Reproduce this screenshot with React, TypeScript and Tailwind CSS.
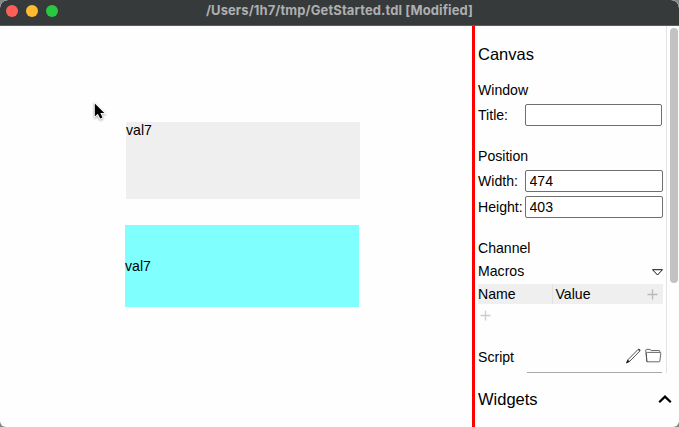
import React from "react";

function Field({ label, value, width }: { label: string; value: string; width: string }) {
  return (
    <div className="flex h-[22px] items-center">
      <label className="w-[47px] shrink-0 whitespace-nowrap">{label}</label>
      <input
        aria-label={label}
        defaultValue={value}
        className={`h-[22px] ${width} rounded-[2px] border border-[#6f6f6f] bg-white px-[3.5px] text-[14.1px] text-black outline-none`}
      />
    </div>
  );
}

function Plus({ className }: { className: string }) {
  return (
    <svg className={className} width="11" height="11" viewBox="0 0 11 11" fill="none" stroke="currentColor" strokeWidth="1.3">
      <path d="M5.5 0.5V10.5M0.5 5.5H10.5" />
    </svg>
  );
}

function TitleBar() {
  return (
    <header className="relative flex h-[26px] shrink-0 items-start justify-center rounded-t-[8px] border-b border-[#5b5d5e] bg-[#373a3b]">
      <div className="absolute left-[6px] top-[5px] flex gap-2">
        <span className="size-3 rounded-full bg-[#ff5f57]" />
        <span className="size-3 rounded-full bg-[#febc2e]" />
        <span className="size-3 rounded-full bg-[#28c840]" />
      </div>
      <h1 className="whitespace-nowrap font-['Inter',sans-serif] text-[13px] font-bold leading-[21px] tracking-[0.1px] text-[#adafb0]">
        /Users/1h7/tmp/GetStarted.tdl [Modified]
      </h1>
    </header>
  );
}

function Canvas() {
  return (
    <main className="relative w-[472px] shrink-0">
      <div className="absolute left-[126px] top-[96px] h-[77px] w-[234px] bg-[#efefef] leading-4">val7</div>
      <div className="absolute left-[125px] top-[199px] flex h-[82px] w-[234px] items-center bg-[#80ffff] pt-px">val7</div>
      <svg className="absolute left-[92px] top-[75px] drop-shadow-[0_1px_1px_rgba(0,0,0,0.35)]" width="15" height="21" viewBox="0 0 15 21">
        <path
          d="M2.8 2.5V15.5L5.8 12.8L8.2 17.6L10.5 16.6L8.3 11.9H12.3Z"
          fill="#000"
          stroke="#fff"
          strokeWidth="1.6"
          paintOrder="stroke"
        />
      </svg>
    </main>
  );
}

function Properties() {
  return (
    <section className="flex h-[348px] shrink-0">
      <div className="h-[347px] w-[192px] border-r border-[#e3e3e3] pl-[3px] pt-[17px] leading-5">
        <h2 className="text-[16.5px] leading-[22px]">Canvas</h2>
        <h3 className="mt-[15px] h-5">Window</h3>
        <div className="mt-1">
          <Field label="Title:" value="" width="w-[137px]" />
        </div>
        <h3 className="mt-5 h-5">Position</h3>
        <div className="mt-1 flex flex-col gap-1">
          <Field label="Width:" value="474" width="w-[138px]" />
          <Field label="Height:" value="403" width="w-[138px]" />
        </div>
        <h3 className="mt-5 h-5">Channel</h3>
        <div className="mt-[3px] flex h-5 w-[185px] items-center justify-between">
          <span>Macros</span>
          <svg className="mt-[3px]" width="11" height="7" viewBox="0 0 11 7" fill="none" stroke="#111" strokeWidth="1">
            <path d="M0.5 0.7H10.5L5.5 6Z" />
          </svg>
        </div>
        <div className="mt-[3px] flex h-5 w-[185px] items-center bg-[#efefef]">
          <span className="h-5 w-[75px] border-r border-[#e2e2e2]">Name</span>
          <span className="flex-1 pl-[2.5px]">Value</span>
          <Plus className="mr-[5px] text-[#b8b8b8]" />
        </div>
        <div className="flex h-[43px] items-start pl-[2px] pt-[6px]">
          <Plus className="text-[#cccccc]" />
        </div>
        <div className="flex h-[26px] w-[184px]">
          <span className="w-[49px] shrink-0">Script</span>
          <div className="flex flex-1 justify-end border-b border-[#a8a8a8]">
            <svg className="mt-px" width="16" height="16" viewBox="0 0 16 16" fill="none" stroke="#222" strokeWidth="0.8">
              <path d="M1 14.3L2.1 11.6L12 1.5Q12.9 0.7 13.7 1.5Q14.5 2.3 13.7 3.2L3.8 13.2Z" />
              <path d="M1 14.3L1.8 12.5L2.8 13.5ZM12.5 1.6L13.6 2.7" fill="#111" strokeWidth="1.2" />
            </svg>
            <svg className="ml-[3px] mt-px" width="17" height="15" viewBox="0 0 17 15" fill="none" stroke="#444" strokeWidth="0.8">
              <path d="M1.9 13.8L0.7 2.4Q0.7 1.4 1.6 1.4H5L6.2 2.5H13.9Q14.8 2.5 14.8 3.4V4.4" />
              <path d="M1.9 13.8L1.3 5.5Q1.3 4.4 2.4 4.4H15Q15.9 4.4 15.8 5.3L14.9 12.9Q14.8 13.8 13.9 13.8H1.9Z" />
            </svg>
          </div>
        </div>
      </div>
      <div className="flex w-3 justify-center pl-[2px] pt-[2px]">
        <div className="h-[255px] w-2 rounded-full bg-[#c2c2c2]" />
      </div>
    </section>
  );
}

export default function App() {
  return (
    <div className="h-[427px] w-[679px] overflow-hidden bg-[#858585]">
      <div className="flex h-full flex-col overflow-hidden rounded-t-[8px] rounded-b-[6px] bg-[#fefefe] font-['Liberation_Sans',Arial,sans-serif] text-[14.1px] text-black">
        <TitleBar />
        <div className="flex min-h-0 flex-1">
          <Canvas />
          <aside className="flex w-[207px] flex-col border-l-[3px] border-[#ff0000]">
            <Properties />
            <footer className="flex h-[50px] items-center justify-between pl-[3px] pr-[7px] text-[16.5px]">
              <h2>Widgets</h2>
              <svg width="14" height="9" viewBox="0 0 14 9" fill="none" stroke="#000" strokeWidth="2.2">
                <path d="M1.2 7.2L7 1.6L12.8 7.2" />
              </svg>
            </footer>
          </aside>
        </div>
      </div>
    </div>
  );
}
